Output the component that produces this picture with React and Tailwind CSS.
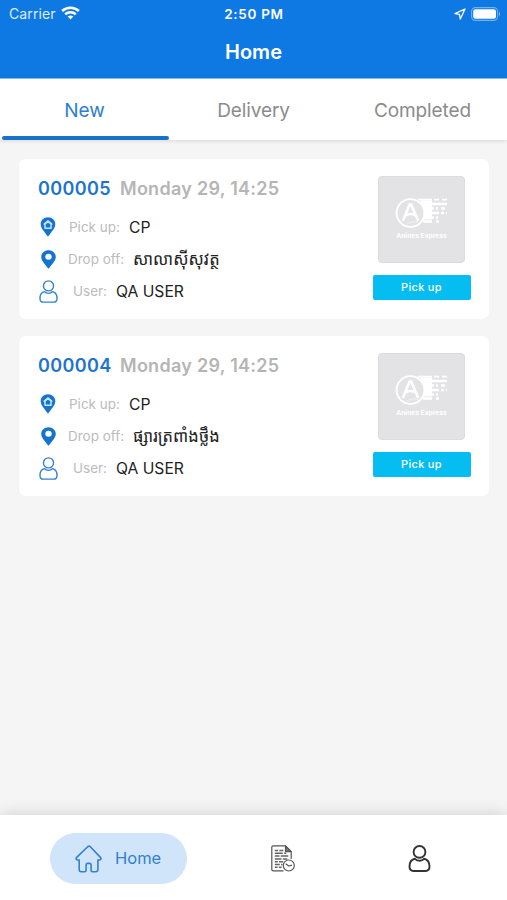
const orders = [
  { id: "000005", date: "Monday 29, 14:25", pickUp: "CP", dropOff: "សាលាស៊ីសុវត្ថ", user: "QA USER" },
  { id: "000004", date: "Monday 29, 14:25", pickUp: "CP", dropOff: "ផ្សារត្រពាំងថ្លឹង", user: "QA USER" },
];

function WifiIcon() {
  return (
    <svg className="ml-[5px] mb-[2px] h-[14px] w-[19px]" viewBox="0 0 19 14" fill="none" stroke="white" strokeWidth="2.6">
      <path d="M1.100 5C5.900.6 13.100.6 17.900 5" />
      <path d="M4.200 8.300c3-2.700 7.600-2.700 10.600 0" />
      <path d="M6.700 10.600c1.700-1.400 3.900-1.400 5.600 0L9.500 13.600z" fill="white" stroke="none" />
    </svg>
  );
}

function LocationArrow() {
  return (
    <svg className="h-[12px] w-[12px]" viewBox="0 0 12 12" fill="none" stroke="white" strokeWidth="1.3" strokeLinejoin="round">
      <path d="M11 1 .9 5.6l4.5.8.9 4.7z" />
    </svg>
  );
}

function Battery() {
  return (
    <svg className="ml-[5px] h-[14px] w-[30px]" viewBox="0 0 30 14">
      <rect x=".6" y=".6" width="26" height="12.8" rx="3.8" fill="none" stroke="#6fb1f3" strokeWidth="1.1" />
      <rect x="2.2" y="2.2" width="22.8" height="9.6" rx="2.3" fill="white" />
      <path d="M28 4.8q2 2.2 0 4.4z" fill="#8fc6fa" />
    </svg>
  );
}

function PickUpPin() {
  return (
    <svg className="h-[20px] w-[16px]" viewBox="0 0 16 20">
      <path d="M8 .3C3.700.3.700 3.400.700 7.300c0 4.300 4.600 8.400 7.300 12.400 2.700-4 7.300-8.100 7.300-12.400C15.300 3.400 12.300.3 8 .3z" fill="#1674d1" />
      <path d="M3.600 7.400 8 3.900l4.400 3.500" fill="none" stroke="#c9e5fb" strokeWidth="1.300" />
      <path d="M5 6.800v4.400h6V6.800L8 4.600z" fill="none" stroke="#c9e5fb" strokeWidth="1.500" strokeLinejoin="round" />
    </svg>
  );
}

function DropOffPin() {
  return (
    <svg className="h-[19px] w-[15px]" viewBox="0 0 14 19" preserveAspectRatio="none">
      <path d="M7 .2C3 .2.200 3.200.200 6.900.200 11 4.500 15 7 18.800c2.500-3.800 6.800-7.800 6.800-11.900C13.800 3.200 11 .2 7 .2z" fill="#1674d1" />
      <circle cx="7" cy="6.800" r="3" fill="white" />
    </svg>
  );
}

function PersonIcon({ className, width }) {
  return (
    <svg className={className} viewBox="0 0 22 27" fill="none" stroke="currentColor" strokeWidth={width} strokeLinejoin="round">
      <circle cx="11" cy="6.900" r="5.900" />
      <path d="M6.500 13.700C3.100 14.300 1 17.600 1 21.600 1 24.800 2.500 26 5 26h12c2.500 0 4-1.200 4-4.400 0-4-2.100-7.300-5.500-7.900-.8 1.200-2.300 2-4.500 2s-3.700-.8-4.500-2z" />
    </svg>
  );
}

function HouseIcon() {
  return (
    <svg className="h-[28px] w-[28px]" viewBox="0 0 28 28" fill="none" stroke="#3480d1" strokeWidth="1.600" strokeLinejoin="round">
      <path d="M12.700 1.700 1.700 12.400c-1.200 1.300-.3 2.600 1 2.600h1.500v9.500c0 1.500.7 2.200 2 2.200h3.600c.9 0 1.300-.5 1.300-1.400v-5c0-1.300.6-1.900 1.600-1.900h1.800c1 0 1.600.6 1.600 1.900v5c0 .9.400 1.400 1.300 1.400h3.500c1.300 0 2-.7 2-2.200V15h1.500c1.500 0 2.200-1.300 1-2.600L15.300 1.700c-.8-.8-1.800-.8-2.600 0z" />
    </svg>
  );
}

function HistoryIcon() {
  return (
    <svg className="h-[27px] w-[24px]" viewBox="0 0 24 27" fill="none" stroke="#555" strokeWidth="1.200" strokeLinejoin="round">
      <path d="M12.500 25.900H2.200Q.8 25.900.8 24.500V2.300Q.8.900 2.200.900h12.300l5.700 5.700v7.500" />
      <path d="M14.500 1v5.600h5.700z" fill="#777" />
      <path d="M3.800 5.500h3.400m1.200 0h4M3.800 8.300h8m1.300 0h2.200M3.800 11.100h4.700m1.200 0h7.600M3.800 13.900h6.700m1.300 0h4.500M3.800 16.700h3m1.200 0h4.200M3.800 19.500h5m1.200 0h1.500M3.800 22.200h2.800m1.200 0h2.800" stroke="#666" strokeWidth="1.500" />
      <circle cx="17.800" cy="20.500" r="5.500" fill="white" />
      <path d="m14.700 18.800 3 2.200 3.300-.8" />
    </svg>
  );
}

function PackageLogo() {
  return (
    <div className="flex h-[87px] w-[87px] flex-col items-center rounded-[4px] border border-[#dcdcde] bg-[#e3e3e5] pt-[20px]">
      <svg className="h-[32px] w-[54px]" viewBox="0 0 54 32" fill="none" stroke="white">
        <path d="M25 3.500h12v19H28q4-9-3-19z" fill="white" stroke="none" />
        <circle cx="15.500" cy="16" r="13.900" fill="#e3e3e5" strokeWidth="1.800" />
        <path d="M7.800 24 14.600 7.500h1.600L23.300 24M10.800 18.500q5-3 9.500 0" strokeWidth="2.600" />
        <path d="M23 2.700h14m2 0h5m3 0h5" strokeWidth="1.700" />
        <path d="M30 7h22M31 11.500h8m2 0h2m3 0h4M31 16h13m2 0h3m2 0h1M30 20.500h9m2 0h2M28 24.500h9m4 0h3" strokeWidth="2.500" />
        <path d="M12 27q7-4 12-1" strokeWidth="1" opacity=".5" />
      </svg>
      <span className="mt-[3px] whitespace-nowrap text-[6.700px] font-bold leading-[9px] text-white">Anines Express</span>
    </div>
  );
}

function Row({ icon, label, value, labelClass, valueClass }) {
  return (
    <div className="flex h-[32px] items-center whitespace-nowrap">
      <div className="flex w-[20px] justify-center">{icon}</div>
      <span className={"pt-px text-[13.500px] text-[#bcbcbc] " + labelClass}>{label}</span>
      <span className={"text-[#222] " + valueClass}>{value}</span>
    </div>
  );
}

function OrderCard({ order }) {
  return (
    <article className="flex h-[160px] justify-between rounded-[7px] bg-white pl-[19px] pr-[18.500px]">
      <div className="pt-[17px]">
        <div className="flex h-[24px] items-center whitespace-nowrap text-[18px] font-semibold">
          <span className="w-[82px] tracking-[0.400px] text-[#1c75cc]">{order.id}</span>
          <span className="tracking-[0.280px] text-[#b5b5b5]">{order.date}</span>
        </div>
        <div className="pt-[11px]">
          <Row icon={<PickUpPin />} label="Pick up:" value={order.pickUp} labelClass="ml-[11px] w-[60px]" valueClass="pt-[2px] text-[15.700px]" />
          <Row icon={<DropOffPin />} label="Drop off:" value={order.dropOff} labelClass="ml-[10px] w-[65px]" valueClass="text-[16.500px]" />
          <Row icon={<PersonIcon className="h-[23px] w-[19px] text-[#3482cf]" width="1.600" />} label="User:" value={order.user} labelClass="ml-[15px] w-[43px]" valueClass="pt-[2px] text-[15.700px]" />
        </div>
      </div>
      <div className="flex w-[98px] flex-col items-center pt-[17px]">
        <PackageLogo />
        <button className="mt-[11.500px] h-[25px] w-[98px] rounded-[2px] bg-[#05bdf0] text-[11px] font-medium tracking-[0.300px] text-white">Pick up</button>
      </div>
    </article>
  );
}

export default function App() {
  return (
    <div className="flex h-[900px] w-[507px] flex-col overflow-hidden bg-[#f5f5f5] font-['Inter','Noto_Sans_Khmer','Noto_Sans',sans-serif]">
      <header className="h-[79px] shrink-0 border-b border-[#83c2f7] bg-[#0f79e3] text-white">
        <div className="grid h-[27px] grid-cols-3 items-center pl-[9px] pr-[6px]">
          <div className="flex items-center text-[14px] text-[#dceeff]"><span className="tracking-[0.100px]">Carrier</span><WifiIcon /></div>
          <div className="-ml-[2px] pt-px text-center text-[13.500px] font-semibold tracking-[0.700px]">2:50 PM</div>
          <div className="flex items-center justify-end"><LocationArrow /><Battery /></div>
        </div>
        <h1 className="pt-[10px] text-center text-[20px] font-semibold leading-[31px]">Home</h1>
      </header>
      <nav className="relative z-10 grid h-[61px] shrink-0 grid-cols-3 bg-white text-center text-[19px] leading-[63px] tracking-[-0.100px] text-[#8b8b8b] shadow-[0_1px_4px_rgba(0,0,0,0.12)]">
        <div className="relative h-[61px] text-[#2b7fce]">New<span className="absolute bottom-0 left-[2px] h-[4px] w-[167px] rounded-[2px] bg-[#1972ca]" /></div>
        <div>Delivery</div>
        <div>Completed</div>
      </nav>
      <main className="flex grow flex-col gap-[17px] pl-[19px] pr-[18px] pt-[19px]">
        {orders.map((order) => <OrderCard key={order.id} order={order} />)}
      </main>
      <footer className="flex h-[85px] shrink-0 items-start bg-white pl-[50px] pt-[18px] shadow-[0_-2px_14px_rgba(0,0,0,0.13)]">
        <div className="flex h-[51px] w-[137px] items-center rounded-full bg-[#d0e5f9] pl-[25px]">
          <HouseIcon />
          <span className="ml-[12px] text-[16.500px] text-[#3480d1]">Home</span>
        </div>
        <div className="ml-[84px] flex h-[51px] w-[24px] items-center"><HistoryIcon /></div>
        <div className="ml-[113px] flex h-[51px] items-center"><PersonIcon className="h-[27px] w-[23px] text-[#333]" width="1.900" /></div>
      </footer>
    </div>
  );
}
